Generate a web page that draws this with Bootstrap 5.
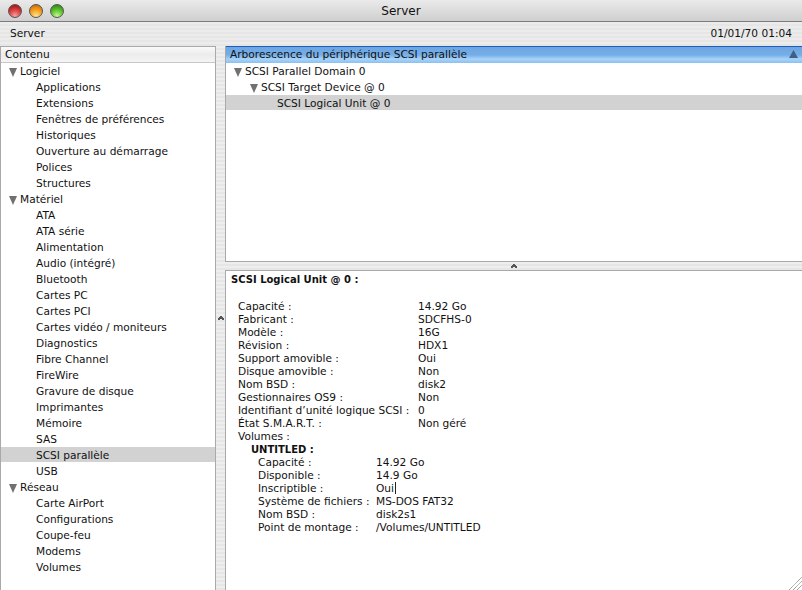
<!DOCTYPE html>
<html lang="fr">
<head>
  <meta charset="UTF-8" />
  <title>Server</title>
  <link href="https://cdn.jsdelivr.net/npm/bootstrap@5.3.3/dist/css/bootstrap.min.css" rel="stylesheet" />
  <style>
    html, body { height: 590px; overflow: hidden; }
    body { font-family: "DejaVu Sans", sans-serif; font-size: 10.6px; color: #111; background: #e8e8e8; }
    .win { width: 802px; height: 590px; }
    .titlebar { height: 22px; border-bottom: 1px solid #7c7c7c; background: linear-gradient(#eaeaea, #cfcfcf); border-radius: 5px 5px 0 0; position: relative; }
    .titlebar span { font-size: 12px; line-height: 23px; }
    .lights { position: absolute; left: 8px; top: 4px; gap: 7px; }
    .light { width: 14px; height: 14px; border-radius: 50%; border: 1px solid #555; }
    .l-red { background: radial-gradient(circle at 50% 90%, #f7a3a3, #e05050 40%, #b82020 75%, #8a1515); }
    .l-yel { background: radial-gradient(circle at 50% 90%, #ffe39a, #f7ad2e 40%, #dd7e0e 75%, #a85f08); }
    .l-grn { background: radial-gradient(circle at 50% 90%, #c8f59e, #6fce38 40%, #3f9c1c 75%, #2b7210); }
    .infobar { height: 24px; padding: 0 10px; line-height: 23px; background: repeating-linear-gradient(#ececec 0 2px, #e6e6e6 2px 4px); }
    .panes { height: 544px; }
    .sidebar { width: 216px; background: #fff; border: 1px solid #a9a9a9; border-bottom: 0; }
    .side-head { height: 16px; line-height: 14px; padding-left: 4px; border-bottom: 1px solid #c8c8c8; background: linear-gradient(#fafafa, #ececec 50%, #f4f4f4); }
    .tree-row { height: 16px; line-height: 17px; white-space: nowrap; }
    .lvl1 { padding-left: 35px; }
    .tree-on { border-bottom: 1px solid transparent; background: #d2d2d2; background-clip: padding-box; }
    .arrow { width: 0; height: 0; border-left: 4.5px solid transparent; border-right: 4.5px solid transparent; border-top: 9px solid #707070; margin: 5px 3px 0 8px; }
    .vsplit { width: 9px; background: repeating-linear-gradient(#eeeeee 0 2px, #e6e6e6 2px 4px); }
    .right { width: 577px; }
    .top-pane { height: 216px; background: #fff; border: 1px solid #a9a9a9; border-right: 0; }
    .blue-head { height: 17px; line-height: 14px; padding: 0 4px 2px; background: linear-gradient(#6ea5e2, #74aee8 50%, #a9d2f8 75%, #8cc0f0); border-top: 1px solid #1d5fb8; margin-top: -1px; }
    .hsplit { height: 8px; background: repeating-linear-gradient(#eeeeee 0 2px, #e6e6e6 2px 4px); }
    .info-pane { flex: 1; background: #fff; border-left: 1px solid #a9a9a9; border-top: 1px solid #a9a9a9; padding: 1px 0 0 4px; position: relative; line-height: 13px; }
    .info-title { height: 28px; padding-left: 1px; font-weight: 700; font-size: 10px; line-height: 16px; }
    .kv { padding-left: 8px; height: 13px; white-space: nowrap; }
    .kv-k { width: 180px; }
    .vol-name { padding-left: 21px; height: 13px; font-weight: 700; font-size: 10px; }
    .kv2 { padding-left: 28px; height: 13px; white-space: nowrap; }
    .kv2 .kv-k { width: 118px; }
    .caret { border-right: 1px solid #222; padding-right: 1px; }
    .resize { position: absolute; right: 0; bottom: 0; }
  </style>
</head>
<body>
  <div class="win d-flex flex-column">
    <div class="titlebar text-center">
      <div class="lights d-flex">
        <div class="light l-red"></div>
        <div class="light l-yel"></div>
        <div class="light l-grn"></div>
      </div>
      <span>Server</span>
    </div>
    <div class="infobar d-flex justify-content-between">
      <span>Server</span>
      <span>01/01/70 01:04</span>
    </div>
    <div class="panes d-flex">
      <div class="sidebar flex-shrink-0">
        <div class="side-head">Contenu</div>
        <div id="tree"></div>
      </div>
      <div class="vsplit flex-shrink-0 d-flex align-items-center justify-content-center">
        <svg width="6" height="4" viewBox="0 0 6 4"><path d="M2 0H4V1H5V2H6V4H4V3H2V4H0V2H1V1H2Z" fill="#555"/></svg>
      </div>
      <div class="right d-flex flex-column">
        <div class="top-pane">
          <div class="blue-head d-flex justify-content-between align-items-center">
            <span>Arborescence du périphérique SCSI parallèle</span>
            <svg width="9" height="8" viewBox="0 0 9 8"><path d="M0 8L4.5 0L9 8Z" fill="#3f5f86"/></svg>
          </div>
          <div class="tree-row d-flex"><div class="arrow"></div>SCSI Parallel Domain 0</div>
          <div class="tree-row d-flex ps-3"><div class="arrow"></div>SCSI Target Device @ 0</div>
          <div class="tree-row tree-on" style="padding-left: 51px">SCSI Logical Unit @ 0</div>
        </div>
        <div class="hsplit d-flex align-items-center justify-content-center">
          <svg width="6" height="4" viewBox="0 0 6 4"><path d="M2 0H4V1H5V2H6V4H4V3H2V4H0V2H1V1H2Z" fill="#555"/></svg>
        </div>
        <div class="info-pane">
          <div class="info-title">SCSI Logical Unit @ 0 :</div>
          <div id="info"></div>
          <svg class="resize" width="14" height="13" viewBox="0 0 14 13"><path d="M1 13L14 0M5 13L14 4M9 13L14 8" stroke="#808080" stroke-dasharray="1 0.6" fill="none"/></svg>
        </div>
      </div>
    </div>
  </div>
  <script>
    const tree = [
      ['Logiciel', ['Applications', 'Extensions', 'Fenêtres de préférences', 'Historiques', 'Ouverture au démarrage', 'Polices', 'Structures']],
      ['Matériel', ['ATA', 'ATA série', 'Alimentation', 'Audio (intégré)', 'Bluetooth', 'Cartes PC', 'Cartes PCI', 'Cartes vidéo / moniteurs', 'Diagnostics', 'Fibre Channel', 'FireWire', 'Gravure de disque', 'Imprimantes', 'Mémoire', 'SAS', 'SCSI parallèle', 'USB']],
      ['Réseau', ['Carte AirPort', 'Configurations', 'Coupe-feu', 'Modems', 'Volumes']],
    ];
    document.getElementById('tree').innerHTML = tree.map(([name, kids]) =>
      `<div class="tree-row d-flex"><div class="arrow"></div>${name}</div>` +
      kids.map(k => `<div class="tree-row lvl1${k === 'SCSI parallèle' ? ' tree-on' : ''}">${k}</div>`).join('')
    ).join('');

    const rows = [
      ['Capacité :', '14.92 Go'], ['Fabricant :', 'SDCFHS-0'], ['Modèle :', '16G'], ['Révision :', 'HDX1'],
      ['Support amovible :', 'Oui'], ['Disque amovible :', 'Non'], ['Nom BSD :', 'disk2'], ['Gestionnaires OS9 :', 'Non'],
      ['Identifiant d’unité logique SCSI :', '0'], ['État S.M.A.R.T. :', 'Non géré'], ['Volumes :', ''],
    ];
    const vol = [
      ['Capacité :', '14.92 Go'], ['Disponible :', '14.9 Go'], ['Inscriptible :', '<span class="caret">Oui</span>'],
      ['Système de fichiers :', 'MS-DOS FAT32'], ['Nom BSD :', 'disk2s1'], ['Point de montage :', '/Volumes/UNTITLED'],
    ];
    const line = (cls, [k, v]) => `<div class="${cls} d-flex"><div class="kv-k">${k}</div><div>${v}</div></div>`;
    document.getElementById('info').innerHTML = rows.map(r => line('kv', r)).join('') +
      '<div class="vol-name">UNTITLED :</div>' + vol.map(r => line('kv2', r)).join('');
  </script>
  <script src="https://cdn.jsdelivr.net/npm/bootstrap@5.3.3/dist/js/bootstrap.bundle.min.js"></script>
</body>
</html>
